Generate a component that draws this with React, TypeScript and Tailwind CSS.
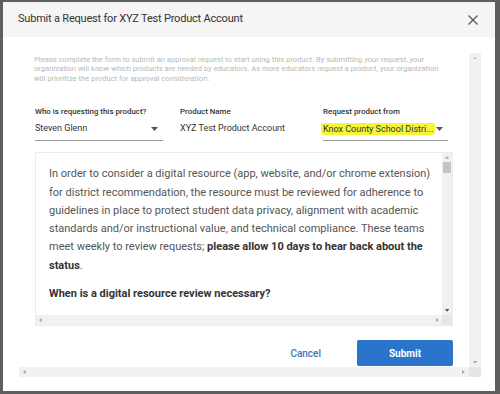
import React from "react";

const Tri = ({ dir, color = "#a8a8a8" }: { dir: "up" | "down" | "left" | "right"; color?: string }) => {
  const pts =
    dir === "up" ? "0,4 3,0 6,4" : dir === "down" ? "0,0 6,0 3,4" : dir === "left" ? "4,0 4,6 0,3" : "0,0 0,6 4,3";
  const w = dir === "up" || dir === "down" ? 6 : 4;
  const h = dir === "up" || dir === "down" ? 4 : 6;
  return (
    <svg width={w * 0.7} height={h * 0.7} viewBox={`0 0 ${w} ${h}`}>
      <polygon points={pts} fill={color} />
    </svg>
  );
};

const Select = ({ label, value, highlight, width }: { label: string; value: string; highlight?: boolean; width: string }) => (
  <div className={`flex flex-col ${width}`}>
    <div className="text-[7.9px] leading-[11px] text-[#333] font-medium whitespace-nowrap">{label}</div>
    <div className="flex items-center justify-between h-[24px] border-b border-[#9a9a9a]">
      {highlight ? (
        <span className="text-[9px] text-[#333] bg-[#f5f53a] rounded-[3px] px-[2px] -ml-[2px] leading-[12px] whitespace-nowrap">
          Knox County School Distri...
        </span>
      ) : (
        <span className="text-[9px] text-[#333] whitespace-nowrap">{value}</span>
      )}
      <svg width="7" height="4" viewBox="0 0 7 4" className="mr-[5px]">
        <polygon points="0,0 7,0 3.5,4" fill="#555" />
      </svg>
    </div>
  </div>
);

export default function App() {
  return (
    <div className="w-[500px] h-[394px] bg-[#5e5e5e] pt-[2px] pl-[3px] pr-[5px] pb-[3px] overflow-hidden" style={{ fontFamily: "Roboto, 'Liberation Sans', sans-serif" }}>
      <div className="w-full h-full bg-white flex flex-col">
        <div className="h-[35px] bg-[#f5f5f5] flex items-center justify-between pl-[15px] pr-[17px] shrink-0">
          <span className="text-[11px] tracking-[-0.2px] text-[#333]">Submit a Request for XYZ Test Product Account</span>
          <svg width="10" height="10" viewBox="0 0 10 10">
            <path d="M0.5 0.5 L9.5 9.5 M9.5 0.5 L0.5 9.5" stroke="#555" strokeWidth="1.2" />
          </svg>
        </div>
        <div className="flex-1 pt-[16px] pl-[16px] pr-[14px] pb-[14px] flex flex-col">
          <div className="flex flex-1 min-h-0">
            <div className="flex-1 pl-[15px] pr-[16px] flex flex-col">
              <p className="text-[7.6px] leading-[9.4px] text-[#b8b8b8] pt-[2px] pr-[10px]">
                Please complete the form to submit an approval request to start using this product. By submitting your request, your organization will know which products are needed by educators. As more educators request a product, your organization will prioritize the product for approval consideration.
              </p>
              <div className="flex mt-[23px] pl-[1px]">
                <Select label="Who is requesting this product?" value="Steven Glenn" width="w-[128px]" />
                <div className="flex flex-col ml-[17px] w-[130px]">
                  <div className="text-[7.9px] leading-[11px] text-[#333] font-medium">Product Name</div>
                  <div className="h-[24px] flex items-center text-[9px] text-[#333] whitespace-nowrap">XYZ Test Product Account</div>
                </div>
                <div className="ml-[13px]">
                  <Select label="Request product from" value="" highlight width="w-[125px]" />
                </div>
              </div>
              <div className="mt-[11px] ml-[1px] border border-[#ececec] flex flex-col h-[174px]">
                <div className="flex flex-1 min-h-0">
                  <div className="flex-1 pl-[13px] pt-[12px] text-[11px] leading-[18.3px] text-[#555] whitespace-nowrap overflow-hidden">
                    <p>
                      In order to consider a digital resource (app, website, and/or chrome extension)
                      <br />
                      for district recommendation, the resource must be reviewed for adherence to
                      <br />
                      guidelines in place to protect student data privacy, alignment with academic
                      <br />
                      standards and/or instructional value, and technical compliance. These teams
                      <br />
                      meet weekly to review requests; <b className="text-[#333]">please allow 10 days to hear back about the</b>
                      <br />
                      <b className="text-[#333]">status</b>.
                    </p>
                    <p className="mt-[10px] font-bold text-[#333]">When is a digital resource review necessary?</p>
                  </div>
                  <div className="w-[10px] bg-[#f1f1f1] flex flex-col items-center">
                    <div className="h-[9px] flex items-center justify-center">
                      <Tri dir="up" />
                    </div>
                    <div className="w-[8px] h-[11px] bg-[#c4c4c4]" />
                    <div className="flex-1" />
                    <div className="h-[9px] flex items-center justify-center">
                      <Tri dir="down" color="#505050" />
                    </div>
                  </div>
                </div>
                <div className="h-[10px] flex">
                  <div className="flex-1 bg-[#f1f1f1] flex items-center justify-between px-[3px]">
                    <Tri dir="left" />
                    <Tri dir="right" />
                  </div>
                  <div className="w-[10px] bg-[#e6e6e6]" />
                </div>
              </div>
              <div className="flex justify-end items-center mt-[14px]">
                <span className="text-[10px] text-[#3d74bf] font-medium mr-[36px]">Cancel</span>
                <div className="w-[96px] h-[26px] bg-[#2b74cc] rounded-[2px] flex items-center justify-center text-white text-[10px] font-bold">
                  Submit
                </div>
              </div>
            </div>
            <div className="w-[12px] bg-[#f1f1f1] flex flex-col items-center">
              <div className="h-[10px] flex items-center justify-center">
                <Tri dir="up" />
              </div>
              <div className="flex-1" />
              <div className="h-[10px] flex items-center justify-center">
                <Tri dir="down" />
              </div>
            </div>
          </div>
          <div className="h-[10px] flex">
            <div className="flex-1 bg-[#f1f1f1] flex items-center justify-between px-[4px]">
              <Tri dir="left" />
              <Tri dir="right" />
            </div>
            <div className="w-[12px] bg-[#e6e6e6]" />
          </div>
        </div>
      </div>
    </div>
  );
}
